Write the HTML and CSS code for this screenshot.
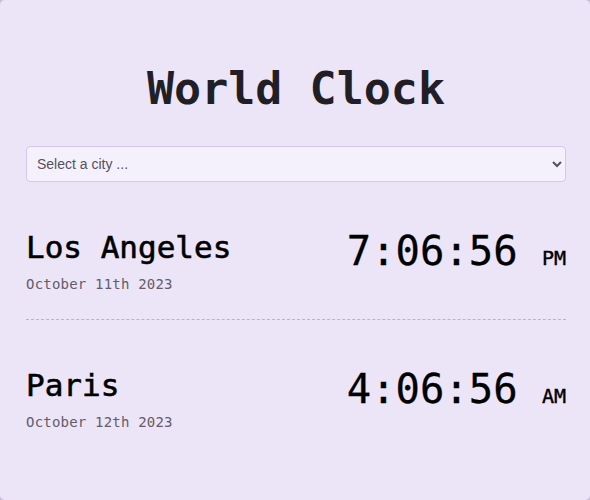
FILE: index.html
```html
<!DOCTYPE html>
<html lang="en">
<head>
<meta charset="utf-8">
<title>World Clock</title>
<link rel="stylesheet" href="styles.css">
</head>
<body>
<main class="card">
  <h1 class="title">World Clock</h1>
  <select class="city-select">
    <option>Select a city ...</option>
    <option>Los Angeles</option>
    <option>Paris</option>
    <option>Tokyo</option>
  </select>
  <section class="cities">
    <div class="city">
      <div class="city-info">
        <div class="city-name">Los Angeles</div>
        <div class="city-date">October 11th 2023</div>
      </div>
      <div class="city-time">7:06:56 <small class="ampm">PM</small></div>
    </div>
    <div class="city">
      <div class="city-info">
        <div class="city-name">Paris</div>
        <div class="city-date">October 12th 2023</div>
      </div>
      <div class="city-time">4:06:56 <small class="ampm">AM</small></div>
    </div>
  </section>
</main>
</body>
</html>
```
FILE: styles.css
```css
html, body {
  margin: 0;
  padding: 0;
}
body {
  background: #c9bfdc;
  font-family: "DejaVu Sans Mono", "Liberation Mono", monospace;
}
.card {
  box-sizing: border-box;
  width: 590px;
  height: 500px;
  background: #ece4f7;
  border-radius: 5px;
  padding: 62px 24px 0 26px;
  overflow: hidden;
}
.title {
  margin: 0;
  text-align: center;
  font-size: 45px;
  font-weight: bold;
  color: #221e26;
  line-height: normal;
}
.city-select {
  display: block;
  box-sizing: border-box;
  width: 540px;
  height: 36px;
  margin: 31px 0 0 0;
  padding: 0 6px;
  font-family: "Liberation Sans", Arial, sans-serif;
  font-size: 14px;
  color: #55505c;
  background: #f4f1fc;
  border: 1px solid #d4c8f0;
  border-radius: 4px;
}
.cities {
  width: 540px;
}
.city {
  display: flex;
  justify-content: space-between;
  align-items: flex-start;
  padding: 47px 0 27px;
  border-bottom: 1px dashed #bbb3c6;
}
.city:last-child {
  border-bottom: none;
}
.city-name {
  font-size: 31px;
  color: #000;
  line-height: normal;
  -webkit-text-stroke: 0.6px #000;
}
.city-date {
  margin-top: 11px;
  font-size: 14px;
  letter-spacing: 0.2px;
  color: #625d69;
  line-height: normal;
}
.city-time {
  margin-top: -2px;
  font-size: 40.5px;
  color: #000;
  line-height: normal;
  -webkit-text-stroke: 0.3px #000;
}
.ampm {
  font-size: 20px;
  -webkit-text-stroke: 0.4px #000;
}
```
